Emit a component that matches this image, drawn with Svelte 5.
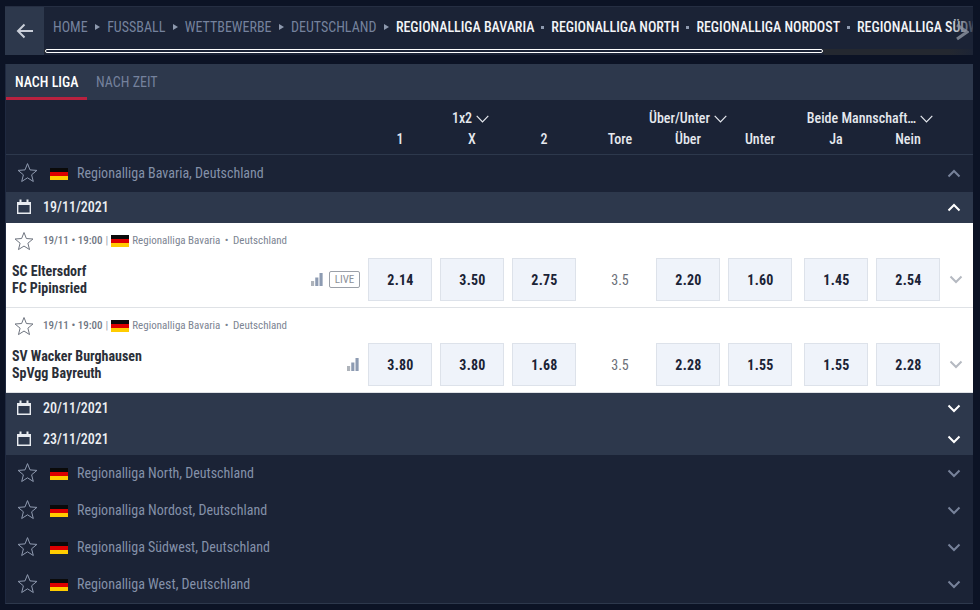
<script>
  const crumbs = ['HOME', 'FUSSBALL', 'WETTBEWERBE', 'DEUTSCHLAND'];
  const leagues = ['REGIONALLIGA BAVARIA', 'REGIONALLIGA NORTH', 'REGIONALLIGA NORDOST', 'REGIONALLIGA SÜDWEST', 'REGIONALLIGA WEST'];
  const matches = [
    { a: 'SC Eltersdorf', b: 'FC Pipinsried', live: true, odds: ['2.14', '3.50', '2.75', '2.20', '1.60', '1.45', '2.54'], tore: '3.5' },
    { a: 'SV Wacker Burghausen', b: 'SpVgg Bayreuth', live: false, odds: ['3.80', '3.80', '1.68', '2.28', '1.55', '1.55', '2.28'], tore: '3.5' }
  ];
  const more = ['Regionalliga North, Deutschland', 'Regionalliga Nordost, Deutschland', 'Regionalliga Südwest, Deutschland', 'Regionalliga West, Deutschland'];
  const star = 'M10.5 1.6 13 7.9l6.9.5-5.3 4.4 1.7 6.7-5.8-3.7-5.8 3.7 1.7-6.7L1.1 8.4 8 7.9z';
</script>

{#snippet starIcon(size)}
  <svg class="star" width={size} height={size} viewBox="0 0 21 21"><path d={star} /></svg>
{/snippet}
{#snippet flag()}
  <span class="flag"><i class="k"></i><i class="r"></i><i class="y"></i></span>
{/snippet}
{#snippet chev(up, cls)}
  <svg class={"chev " + cls} width="14" height="9" viewBox="0 0 14 9"><path d={up ? 'M1.5 7.5 7 2l5.5 5.5' : 'M1.5 1.5 7 7l5.5-5.5'} /></svg>
{/snippet}
{#snippet thin()}
  <svg class="thin" width="13" height="8" viewBox="0 0 13 8"><path d="M.7.9 6.5 6.8 12.3.9" /></svg>
{/snippet}
{#snippet cal()}
  <svg class="cal" width="14" height="15" viewBox="0 0 14 15"><path class="body" d="M.7 3.7h12.6v10.6H.7z" /><path class="top" d="M0 3h14v3H0zM2.5 0.5h2v3h-2zM9.5 0.5h2v3h-2z" /></svg>
{/snippet}
{#snippet bars()}
  <svg class="bars" width="12" height="13" viewBox="0 0 13 13" preserveAspectRatio="none"><rect class="b1" x="0" y="8" width="3.4" height="5" /><rect class="b2" x="4.6" y="4.5" width="3.4" height="8.5" /><rect class="b3" x="9.2" y="0" width="3.4" height="13" /></svg>
{/snippet}

<div class="page">
  <nav class="crumbbar">
    <div class="back">
      <svg width="18" height="16" viewBox="0 0 18 16"><path d="M17 8H2.5M8.5 1.5 2 8l6.5 6.5" /></svg>
    </div>
    <div class="crumbwrap">
      <div class="crumbs">
        {#each crumbs as c}
          <span class="c muted">{c}</span><span class="tri"></span>
        {/each}
        {#each leagues as l, i}
          {#if i > 0}<span class="dot"></span>{/if}
          <span class="c lit">{l}</span>
        {/each}
      </div>
      <div class="track"><div class="thumb"></div></div>
      <div class="fade"></div>
      <svg class="next" width="14" height="18" viewBox="0 0 14 18"><path d="M2 2l10 7-10 7" /></svg>
    </div>
  </nav>

  <main class="panel">
    <div class="tabs">
      <div class="tab on">NACH LIGA</div>
      <div class="tab">NACH ZEIT</div>
    </div>

    <div class="head">
      <div class="g1">
        <div class="gt">1x2 {@render thin()}</div>
        <div class="labels"><span>1</span><span>X</span><span>2</span></div>
      </div>
      <div class="tore-h">Tore</div>
      <div class="g2">
        <div class="gt">Über/Unter {@render thin()}</div>
        <div class="labels"><span>Über</span><span>Unter</span></div>
      </div>
      <div class="g3">
        <div class="gt">Beide Mannschaft… {@render thin()}</div>
        <div class="labels"><span>Ja</span><span>Nein</span></div>
      </div>
    </div>

    <div class="league">
      {@render starIcon(21)}
      {@render flag()}
      <span class="lname">Regionalliga Bavaria, Deutschland</span>
      {@render chev(true, 'dim')}
    </div>

    <div class="date">{@render cal()}<span>19/11/2021</span>{@render chev(true, 'bright')}</div>

    {#each matches as m}
      <div class="match">
        <div class="meta">
          {@render starIcon(20)}
          <b>19/11 • 19:00</b><em>|</em>
          {@render flag()}
          <span>Regionalliga Bavaria</span><span class="sep">•</span><span>Deutschland</span>
        </div>
        <div class="line">
          <div class="teams"><div>{m.a}</div><div>{m.b}</div></div>
          <div class="info">
            {@render bars()}
            {#if m.live}<span class="live">LIVE</span>{/if}
          </div>
          <div class="g1 odds">{#each m.odds.slice(0, 3) as o}<button>{o}</button>{/each}</div>
          <div class="tore">{m.tore}</div>
          <div class="g2 odds">{#each m.odds.slice(3, 5) as o}<button>{o}</button>{/each}</div>
          <div class="g3 odds">{#each m.odds.slice(5) as o}<button>{o}</button>{/each}</div>
          {@render chev(false, 'pale')}
        </div>
      </div>
    {/each}

    <div class="date">{@render cal()}<span>20/11/2021</span>{@render chev(false, 'bright')}</div>
    <div class="date">{@render cal()}<span>23/11/2021</span>{@render chev(false, 'bright')}</div>

    {#each more as l}
      <div class="league">
        {@render starIcon(21)}
        {@render flag()}
        <span class="lname">{l}</span>
        {@render chev(false, 'dim')}
      </div>
    {/each}
  </main>
</div>

<style>
  :global(body) {
    margin: 0;
    background: #0c1325;
    font-family: Roboto, "Liberation Sans", sans-serif;
    font-stretch: 75%;
  }
  .page {
    width: 968px;
    height: 610px;
    padding: 6px 7px 0 5px;
    overflow: hidden;
    font-stretch: 75%;
  }
  .crumbbar {
    display: flex;
    height: 49px;
    background: #1b2336;
    border-top: 1px solid #252e42;
    box-sizing: border-box;
  }
  .back {
    width: 39px;
    flex: none;
    background: #2d384c;
    display: flex;
    align-items: center;
    justify-content: center;
  }
  .back svg path {
    fill: none;
    stroke: #c9ced8;
    stroke-width: 2;
  }
  .crumbwrap {
    position: relative;
    flex: 1;
    min-width: 0;
    overflow: hidden;
  }
  .crumbs {
    display: flex;
    align-items: center;
    height: 40px;
    padding-left: 9px;
    white-space: nowrap;
    font-size: 14px;
    line-height: 40px;
  }
  .c { flex: none; }
  .muted { color: #75829d; }
  .lit { color: #f2f4f8; font-weight: 500; letter-spacing: -.04px; }
  .tri {
    flex: none;
    width: 0;
    height: 0;
    margin: 0 7.25px;
    border-left: 5px solid #8e99ae;
    border-top: 3px solid transparent;
    border-bottom: 3px solid transparent;
  }
  .dot {
    flex: none;
    width: 3px;
    height: 3px;
    margin: 0 7px;
    background: #8e99ae;
  }
  .track {
    position: absolute;
    left: 0;
    right: 0;
    bottom: 0;
    top: 42px;
    background: #242830;
  }
  .thumb {
    position: absolute;
    left: 1px;
    top: 0;
    width: 778px;
    height: 4px;
    box-sizing: border-box;
    border: 1px solid #fff;
    border-radius: 2px;
    background: #1b2336;
  }
  .thumb::after {
    content: "";
    position: absolute;
    left: -2px;
    right: -2px;
    top: 3px;
    height: 4px;
    background: #1b2336;
  }
  .fade {
    position: absolute;
    right: 0;
    top: 0;
    bottom: 0;
    width: 24px;
    background: linear-gradient(90deg, rgba(27, 35, 54, 0), rgba(27, 35, 54, .85));
  }
  .next {
    position: absolute;
    right: 4px;
    top: 16px;
  }
  .next path {
    fill: none;
    stroke: #8d93a1;
    stroke-width: 3;
    opacity: .8;
  }
  .panel {
    margin-top: 9px;
    background: #1b2336;
    border-left: 1px solid #1f2940;
    border-bottom: 1px solid #2d384c;
  }
  .tabs {
    display: flex;
    height: 36px;
    background: #2d384c;
    font-size: 14px;
  }
  .tab {
    padding: 0 9px;
    line-height: 36px;
    color: #75829d;
    white-space: nowrap;
    box-sizing: border-box;
  }
  .tab.on {
    width: 81px;
    color: #fff;
    font-weight: 500;
    border-bottom: 3px solid #b8213f;
    height: 36px;
  }
  .head {
    display: flex;
    align-items: flex-end;
    height: 55px;
    box-sizing: border-box;
    padding: 0 0 4px 362px;
    border-bottom: 1px solid #2d384c;
    color: #e6e9ef;
    font-size: 14px;
    font-weight: 500;
    line-height: 21px;
  }
  .gt {
    display: flex;
    justify-content: center;
    align-items: center;
    gap: 4px;
    white-space: nowrap;
  }
  .g1 .gt { width: 205px; }
  .g2 .gt { width: 64px; }
  .g3 .gt { width: 132px; }
  .thin { flex: none; }
  .thin path {
    fill: none;
    stroke: #e6e9ef;
    stroke-width: 1.2;
  }
  .labels {
    display: flex;
    gap: 8px;
  }
  .labels span {
    width: 64px;
    text-align: center;
  }
  .g1 { width: 208px; flex: none; }
  .g2 { width: 136px; flex: none; }
  .g3 { width: 136px; flex: none; margin-left: 12px; }
  .tore-h {
    width: 64px;
    margin: 0 4px 0 12px;
    text-align: center;
    flex: none;
  }
  .league {
    display: flex;
    align-items: center;
    height: 37px;
    box-sizing: border-box;
    padding: 0 0 2px 11px;
    color: #8491a9;
    font-size: 14px;
  }
  .star { flex: none; }
  .star path {
    fill: none;
    stroke: #8f9ab0;
    stroke-width: 1;
  }
  .flag {
    display: flex;
    flex-direction: column;
    flex: none;
    width: 18px;
    height: 12px;
  }
  .flag i { flex: 1; }
  .flag .k { background: #0a0a0a; }
  .flag .r { background: #d00; }
  .flag .y { background: #fc0; }
  .league .flag { margin: 2px 0 0 12px; }
  .lname { margin-left: 9px; flex: 1; }
  .chev { flex: none; }
  .chev path {
    fill: none;
    stroke-width: 2;
  }
  .chev.dim { margin: 2px 12px 0 0; }
  .chev.dim path { stroke: #77829a; }
  .chev.bright { margin: 2px 12px 0 0; }
  .chev.bright path { stroke: #fff; }
  .chev.pale { margin: 0 0 1px 9px; }
  .chev.pale path { stroke: #b5b9c1; }
  .date {
    display: flex;
    align-items: center;
    height: 31px;
    box-sizing: border-box;
    padding: 0 0 2px 11px;
    background: #2d384c;
    color: #eef0f4;
    font-size: 14px;
    font-weight: 500;
  }
  .date span { margin-left: 12px; flex: 1; }
  .cal .body { fill: none; stroke: #e8ebf0; stroke-width: 1.4; }
  .cal .top { fill: #e8ebf0; }
  .match {
    height: 85px;
    box-sizing: border-box;
    background: #fff;
    border-bottom: 1px solid #dfe2e6;
  }
  .meta {
    display: flex;
    align-items: center;
    height: 35px;
    padding-left: 8px;
    font-size: 11px;
    color: #7c8492;
  }
  .meta .star path { stroke: #666d78; }
  .meta b {
    margin-left: 9px;
    font-weight: 500;
    color: #6f7683;
  }
  .meta em {
    font-style: normal;
    margin: 0 3px;
    color: #a0a5ad;
  }
  .meta .flag { margin-right: 3px; }
  .sep { margin: 0 4.5px; }
  .line {
    display: flex;
    align-items: center;
    height: 43px;
    padding-left: 6px;
  }
  .teams {
    width: 295px;
    flex: none;
    font-size: 14px;
    font-weight: 700;
    line-height: 17px;
    color: #2b2f38;
  }
  .info {
    width: 53px;
    flex: none;
    margin-right: 8px;
    display: flex;
    align-items: center;
    justify-content: flex-end;
    gap: 5px;
  }
  .bars { margin-right: 1px; }
  .bars .b1 { fill: #aeb3ba; }
  .bars .b2, .bars .b3 { fill: #8d9bb2; }
  .live {
    width: 31px;
    height: 17px;
    box-sizing: border-box;
    border: 1px solid #9ba0a8;
    border-radius: 2px;
    color: #8b9098;
    font-size: 11px;
    line-height: 15px;
    text-align: center;
  }
  .odds { display: flex; gap: 8px; }
  .odds button {
    width: 64px;
    height: 43px;
    padding: 0 0 0 1px;
    box-sizing: border-box;
    background: #eff3fa;
    border: 1px solid #dde2ea;
    font: inherit;
    font-stretch: inherit;
    font-size: 14px;
    font-weight: 700;
    letter-spacing: .3px;
    color: #1b2336;
  }
  .tore {
    width: 64px;
    flex: none;
    margin: 0 4px 0 12px;
    text-align: center;
    font-size: 14px;
    color: #6a6f78;
  }
</style>
